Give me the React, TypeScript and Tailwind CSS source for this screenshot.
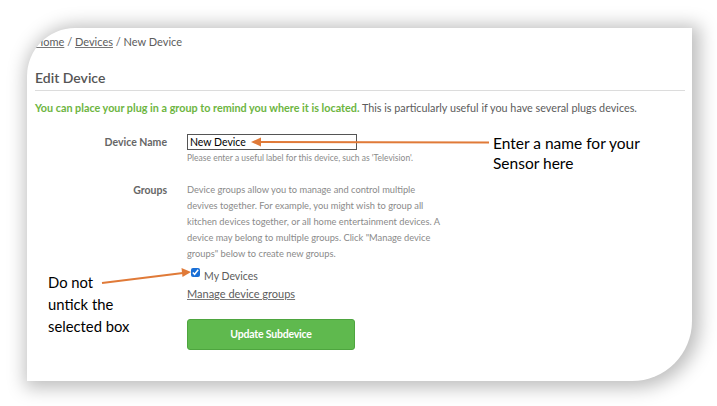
import { FC } from "react";

const Arrows: FC = () => (
  <svg
    className="absolute left-0 top-0 pointer-events-none"
    width={717}
    height={406}
    viewBox="0 0 717 406"
  >
    <line x1={489} y1={142.5} x2={259} y2={142} stroke="#e07a38" strokeWidth={2} />
    <polygon points="251,142 261,137.5 261,146.5" fill="#e07a38" />
    <line x1={102} y1={283} x2={183} y2={273} stroke="#e07a38" strokeWidth={2} />
    <polygon points="191,272 181.5,268 182.5,277" fill="#e07a38" />
  </svg>
);

const App: FC = () => {
  return (
    <div className="relative w-[717px] h-[406px] overflow-hidden bg-white pt-[28px] pl-[27px] font-['Lato',_'Liberation_Sans',_sans-serif]">
      <div className="w-[665px] h-[353px] bg-white rounded-tl-[48px] rounded-br-[60px] overflow-hidden shadow-[3px_2px_18px_5px_rgba(0,0,0,0.26)] pl-[8px] pr-[7px] pt-[7px] flex flex-col">
        {/* breadcrumb */}
        <div className="text-[11px] leading-[14px] text-[#5c5c5c]">
          <span className="underline decoration-[#777]">Home</span> /{" "}
          <span className="underline decoration-[#777]">Devices</span> / New Device
        </div>

        <h1 className="mt-[20px] pb-[3px] border-b border-[#dcdcdc] text-[14px] leading-[18px] font-semibold text-[#555]">
          Edit Device
        </h1>

        <p className="mt-[10px] text-[10.8px] leading-[14px] text-[#5c5c5c]">
          <span className="font-bold text-[#6db53f]">
            You can place your plug in a group to remind you where it is located.
          </span>{" "}
          This is particularly useful if you have several plugs devices.
        </p>

        {/* device name */}
        <div className="mt-[19px] flex gap-[20px]">
          <div className="w-[132px] text-right text-[10.5px] leading-[16px] font-bold text-[#666]">
            Device Name
          </div>
          <div className="flex flex-col">
            <input
              type="text"
              defaultValue="New Device"
              className="w-[170px] h-[16px] border border-[#555] px-[2px] text-[10.5px] leading-[14px] text-black outline-none"
            />
            <div className="mt-[2px] text-[8.5px] leading-[12px] text-[#8a8a8a]">
              Please enter a useful label for this device, such as 'Television'.
            </div>
          </div>
        </div>

        {/* groups */}
        <div className="mt-[18px] flex gap-[20px]">
          <div className="w-[132px] text-right text-[10.5px] leading-[16px] font-bold text-[#666]">
            Groups
          </div>
          <div className="flex flex-col">
            <p className="w-[270px] whitespace-nowrap text-[9.3px] leading-[16px] text-[#8a8a8a]">
              Device groups allow you to manage and control multiple
              <br />
              devives together. For example, you might wish to group all
              <br />
              kitchen devices together, or all home entertainment devices. A
              <br />
              device may belong to multiple groups. Click "Manage device
              <br />
              groups" below to create new groups.
            </p>
            <label className="mt-[5px] flex items-start gap-[4px] pl-[4px] text-[10.5px] leading-[14px] text-[#5c5c5c]">
              <input
                type="checkbox"
                defaultChecked
                className="mt-[1px] w-[9px] h-[9px] accent-[#1a6fd6]"
              />
              <span className="mt-[2px]">My Devices</span>
            </label>
            <a className="mt-[4px] text-[11px] leading-[14px] text-[#5c5c5c] underline decoration-[#777]">
              Manage device groups
            </a>
            <button className="mt-[18px] w-[168px] h-[31px] rounded-[3px] bg-[#5fb94e] border border-[#4ea53f] text-white text-[10.5px] font-bold tracking-[-0.2px]">
              Update Subdevice
            </button>
          </div>
        </div>
      </div>

      {/* annotations */}
      <div className="absolute left-[493px] top-[133px] text-[15.5px] leading-[20px] text-black">
        Enter a name for your
        <br />
        Sensor here
      </div>
      <div className="absolute left-[48px] top-[271px] text-[14.8px] leading-[22px] text-black">
        Do not
        <br />
        untick the
        <br />
        selected box
      </div>
      <Arrows />
    </div>
  );
};

export default App;
